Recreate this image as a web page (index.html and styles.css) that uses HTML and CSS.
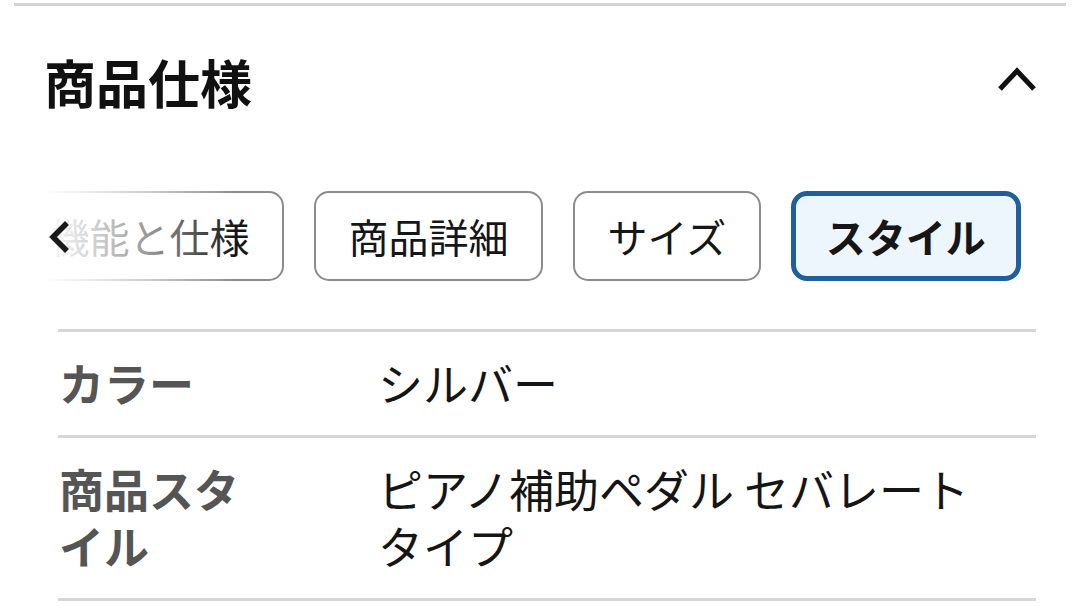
FILE: index.html
```html
<!DOCTYPE html>
<html lang="ja">
<head>
<meta charset="utf-8">
<link rel="stylesheet" href="styles.css">
</head>
<body>
<div class="page">
  <div class="top-rule"></div>
  <section class="spec">
    <header class="spec-head">
      <h2 class="spec-title">商品仕様</h2>
      <svg class="caret" width="40" height="28" viewBox="0 0 40 28" aria-hidden="true">
        <polyline points="3,23 20,5 37,23" fill="none" stroke="#111" stroke-width="5" stroke-linecap="butt" stroke-linejoin="miter"/>
      </svg>
    </header>
    <div class="tabs-wrap">
      <div class="tabs">
        <div class="tab">機能と仕様</div>
        <div class="tab">商品詳細</div>
        <div class="tab">サイズ</div>
        <div class="tab tab-active">スタイル</div>
      </div>
      <div class="tabs-fade">
        <svg class="back" width="24" height="34" viewBox="0 0 24 34" aria-hidden="true">
          <polyline points="20,3 6,17 20,31" fill="none" stroke="#1a1a1a" stroke-width="5.5"/>
        </svg>
      </div>
    </div>
    <div class="spec-table">
      <div class="spec-row">
        <div class="spec-label">カラー</div>
        <div class="spec-value">シルバー</div>
      </div>
      <div class="spec-row">
        <div class="spec-label">商品スタイル</div>
        <div class="spec-value">ピアノ補助ペダル セバレートタイプ</div>
      </div>
    </div>
  </section>
</div>
</body>
</html>
```

FILE: styles.css
```css
* { box-sizing: border-box; }
html, body {
  margin: 0;
  padding: 0;
  background: #fff;
}
body {
  font-family: "Noto Sans CJK JP", "Noto Sans", sans-serif;
  color: #111;
  width: 1080px;
  height: 616px;
  overflow: hidden;
}
.page {
  padding-top: 3px;
}
.top-rule {
  height: 3px;
  margin: 0 14px;
  background: #d3d3d3;
}
.spec-head {
  display: flex;
  align-items: center;
  justify-content: space-between;
  margin-top: 45px;
  padding: 0 43px 0 44px;
  height: 62px;
}
.spec-title {
  margin: 0;
  font-size: 52px;
  line-height: 62px;
  font-weight: 700;
  color: #111;
}
.caret {
  display: block;
  margin-top: -4px;
}
.tabs-wrap {
  position: relative;
  margin-top: 78px;
  height: 92px;
  overflow: hidden;
}
.tabs {
  display: flex;
  gap: 30px;
  padding-left: 15px;
}
.tab {
  flex: none;
  height: 90px;
  display: flex;
  align-items: center;
  padding: 0 32.5px;
  border: 2px solid #8c8c8c;
  border-radius: 15px;
  font-size: 40px;
  line-height: 1;
  color: #161616;
  background: #fff;
  white-space: nowrap;
}
.tab-active {
  border: 5px solid #1f5f9e;
  background: #eef6fd;
  font-weight: 700;
  padding: 0 30px;
  border-radius: 16px;
}
.tabs-fade {
  position: absolute;
  left: 0;
  top: 0;
  bottom: 0;
  width: 240px;
  display: flex;
  align-items: center;
  padding-left: 47px;
  background: linear-gradient(to right, #fff 0, #fff 42px, rgba(255,255,255,0.8) 95px, rgba(255,255,255,0.5) 160px, rgba(255,255,255,0) 235px);
}
.back {
  display: block;
}
.spec-table {
  margin: 46px 44px 0 58px;
  border-top: 3px solid #d6d6d6;
}
.spec-row {
  display: flex;
  padding: 22px 0 24px;
  border-bottom: 3px solid #d6d6d6;
  font-size: 45px;
  line-height: 57px;
}
.spec-label {
  flex: none;
  width: 320px;
  padding: 0 110px 0 1px;
  font-weight: 700;
  color: #555;
}
.spec-value {
  flex: 1;
  padding-right: 50px;
  color: #151515;
}
```
